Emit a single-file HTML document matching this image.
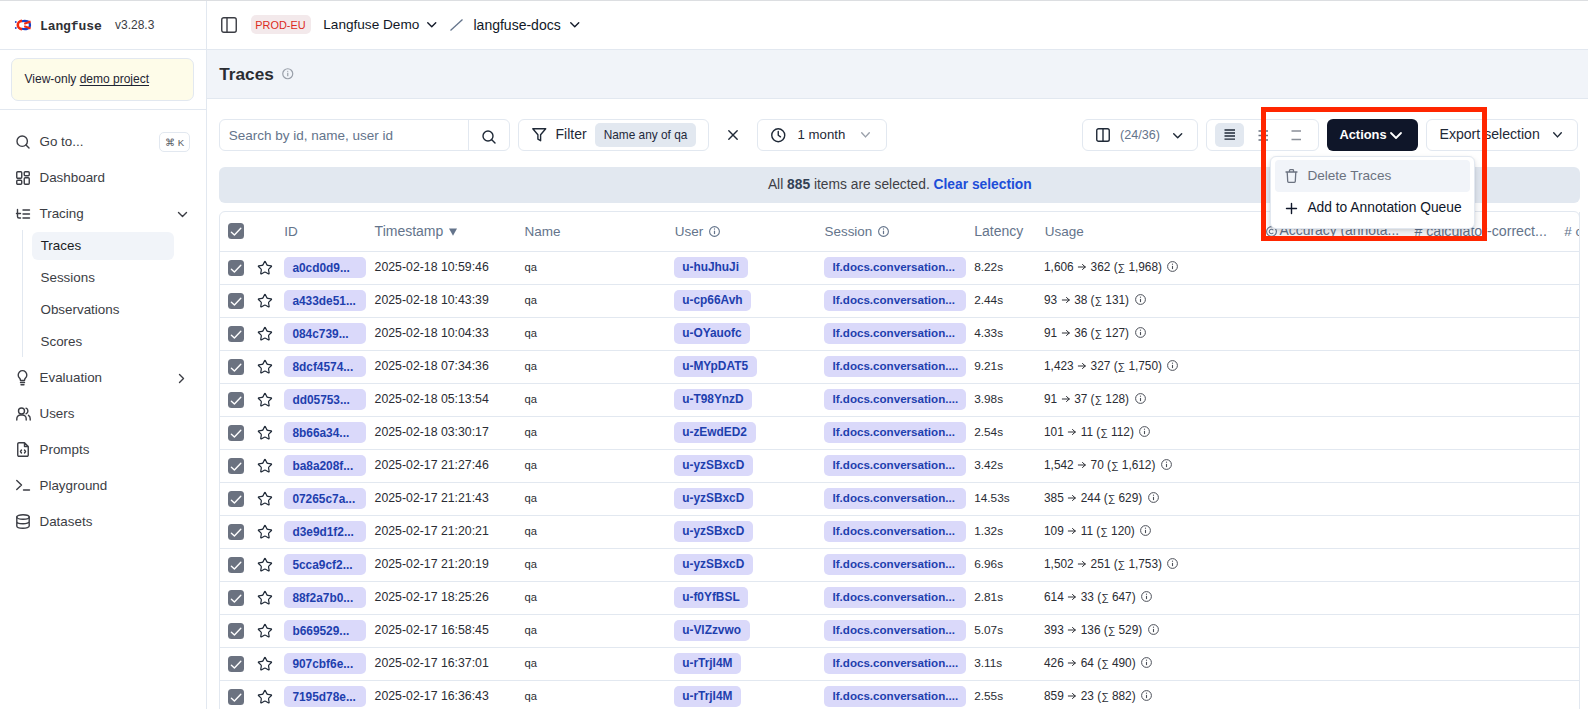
<!DOCTYPE html>
<html><head><meta charset="utf-8">
<style>
*{box-sizing:border-box;margin:0;padding:0}
html,body{width:1588px;height:709px;overflow:hidden;background:#fff;font-family:"Liberation Sans",sans-serif;color:#0f172a;position:relative}
.a{position:absolute}
.t{position:absolute;white-space:nowrap;line-height:1}
svg{position:absolute;overflow:visible}
.ic{fill:none;stroke:#3b3d44;stroke-width:1.4;stroke-linecap:round;stroke-linejoin:round}
</style></head><body>
<div class="a" style="left:0px;top:0px;width:1588px;height:1px;background:#dcdee1;"></div>
<div class="a" style="left:206px;top:1px;width:1px;height:708px;background:#e2e8f0;"></div>
<div class="a" style="left:0px;top:49px;width:206px;height:1px;background:#e2e8f0;"></div>
<div class="a" style="left:0px;top:109px;width:206px;height:1px;background:#e2e8f0;"></div>
<div class="a" style="left:207px;top:49px;width:1381px;height:1px;background:#e2e8f0;"></div>
<div class="a" style="left:207px;top:50px;width:1381px;height:48px;background:#f1f4f9;"></div>
<div class="a" style="left:207px;top:98px;width:1381px;height:1px;background:#e2e8f0;"></div>
<svg style="left:15px;top:20px;" width="16" height="10" viewBox="0 0 16 10"><path d="M6.8 1.2 C11 0.1 15 1.2 15 5 C15 8.8 11 9.9 6.8 8.8" fill="none" stroke="#1d3ec2" stroke-width="2.2"/><path d="M7 0.9 A4.2 4.1 0 0 0 7 9.1" fill="none" stroke="#f2290f" stroke-width="2.6"/><path d="M9.2 3.8 L15.6 1.4 M9.2 6.3 L15.6 8.6" stroke="#f2290f" stroke-width="2.1"/><circle cx="0.8" cy="2" r="0.9" fill="#1d3ec2"/><circle cx="0.8" cy="8" r="0.9" fill="#1d3ec2"/></svg>
<div class="t" style="left:40px;top:19.64px;font-size:13px;color:#2f3035;font-weight:700;font-family:'Liberation Mono',monospace;letter-spacing:-0.1px">Langfuse</div>
<div class="t" style="left:115px;top:19.44px;font-size:12px;color:#3b3d44;font-weight:400;">v3.28.3</div>
<div class="a" style="left:11px;top:58px;width:183px;height:43px;background:#fefce9;border:1px solid #e2e8f0;border-radius:7px"></div>
<div class="t" style="left:24.5px;top:73.44px;font-size:12px;color:#1e2433;font-weight:400;">View-only <span style="text-decoration:underline;text-underline-offset:2px">demo project</span></div>
<div class="t" style="left:39.5px;top:135.06px;font-size:13.4px;color:#3b3d44;font-weight:400;">Go to...</div>
<svg style="left:16px;top:135px;" width="14" height="14" viewBox="0 0 14 14"><circle cx="6.2" cy="6.2" r="5.2" class="ic"/><path d="M10 10 L13 13" class="ic"/></svg>
<div class="a" style="left:159px;top:132px;width:30.5px;height:19.5px;background:#fff;border:1px solid #e2e8f0;border-radius:5px"></div>
<div class="t" style="left:165.2px;top:137.97px;font-size:9.6px;color:#555a63;font-weight:400;">⌘ K</div>
<div class="t" style="left:39.5px;top:170.96px;font-size:13.4px;color:#3b3d44;font-weight:400;">Dashboard</div>
<svg style="left:16px;top:171px;" width="14" height="14" viewBox="0 0 14 14"><rect x="0.75" y="0.75" width="5" height="6.5" rx="1" class="ic"/><rect x="8.25" y="0.75" width="5" height="4" rx="1" class="ic"/><rect x="8.25" y="6.75" width="5" height="6.5" rx="1" class="ic"/><rect x="0.75" y="9.25" width="5" height="4" rx="1" class="ic"/></svg>
<div class="t" style="left:39.5px;top:207.06px;font-size:13.4px;color:#3b3d44;font-weight:400;">Tracing</div>
<svg style="left:16px;top:209px;" width="14" height="10" viewBox="0 0 14 10"><path d="M1.5 0.5 V7.5 Q1.5 9 3 9 H4.5 M0.5 4.5 H4.5 M7 1 H13.5 M7 5 H13.5 M7 9 H13.5" class="ic"/></svg>
<svg style="left:177.5px;top:211.5px;" width="9" height="5" viewBox="0 0 9 5"><path d="M0.5 0.5 L4.5 4.5 L8.5 0.5" class="ic"/></svg>
<div class="a" style="left:22px;top:230px;width:1px;height:127px;background:#e2e8f0;"></div>
<div class="a" style="left:32px;top:232px;width:142px;height:28px;background:#f1f4f9;border-radius:6px"></div>
<style>.sub{}</style>
<div class="t" style="left:40.7px;top:239.06px;font-size:13.4px;color:#1a1c22;font-weight:400;">Traces</div>
<div class="t" style="left:40.5px;top:271.06px;font-size:13.4px;color:#3b3d44;font-weight:400;">Sessions</div>
<div class="t" style="left:40.5px;top:303.06px;font-size:13.4px;color:#3b3d44;font-weight:400;">Observations</div>
<div class="t" style="left:40.5px;top:335.06px;font-size:13.4px;color:#3b3d44;font-weight:400;">Scores</div>
<div class="t" style="left:39.5px;top:371.06px;font-size:13.4px;color:#3b3d44;font-weight:400;">Evaluation</div>
<svg style="left:17px;top:371px;" width="11" height="15" viewBox="0 0 11 15"><path d="M3.5 9.5 Q3.5 8 2.5 7 A4.3 4.3 0 1 1 8.5 7 Q7.5 8 7.5 9.5 Z" class="ic"/><path d="M3.5 11.5 H7.5 M4 13.8 H7" class="ic"/></svg>
<svg style="left:179px;top:374px;" width="6" height="9" viewBox="0 0 6 9"><path d="M0.5 0.5 L4.5 4.5 L0.5 8.5" class="ic"/></svg>
<div class="t" style="left:39.5px;top:407.06px;font-size:13.4px;color:#3b3d44;font-weight:400;">Users</div>
<svg style="left:15.5px;top:407px;" width="15" height="14" viewBox="0 0 15 14"><circle cx="5.5" cy="4" r="3" class="ic"/><path d="M0.8 13 V11.8 A3.8 3.8 0 0 1 4.6 8 H6.4 A3.8 3.8 0 0 1 10.2 11.8 V13 M10 1.2 A3 3 0 0 1 10 6.8 M12.5 8.3 A3.8 3.8 0 0 1 14.2 11.8 V13" class="ic"/></svg>
<div class="t" style="left:39.5px;top:443.06px;font-size:13.4px;color:#3b3d44;font-weight:400;">Prompts</div>
<svg style="left:17px;top:442px;" width="12" height="15" viewBox="0 0 12 15"><path d="M7.5 0.75 H2 A1.25 1.25 0 0 0 0.75 2 V13 A1.25 1.25 0 0 0 2 14.25 H10 A1.25 1.25 0 0 0 11.25 13 V4.5 Z M7.5 0.75 V4.5 H11.25" class="ic"/><path d="M4.5 8 L3.5 9.5 L4.5 11 M7.5 8 L8.5 9.5 L7.5 11" class="ic" stroke-width="1.1"/></svg>
<div class="t" style="left:39.5px;top:479.06px;font-size:13.4px;color:#3b3d44;font-weight:400;">Playground</div>
<svg style="left:16px;top:479px;" width="14" height="12" viewBox="0 0 14 12"><path d="M0.75 1.5 L5.5 6 L0.75 10.5 M7.5 11 H13.5" class="ic"/></svg>
<div class="t" style="left:39.5px;top:515.06px;font-size:13.4px;color:#3b3d44;font-weight:400;">Datasets</div>
<svg style="left:16px;top:514px;" width="14" height="15" viewBox="0 0 14 15"><ellipse cx="7" cy="3" rx="6.2" ry="2.3" class="ic"/><path d="M0.8 3 V12 A6.2 2.3 0 0 0 13.2 12 V3 M0.8 7.5 A6.2 2.3 0 0 0 13.2 7.5" class="ic"/></svg>
<svg style="left:221px;top:17px;" width="16" height="16" viewBox="0 0 16 16"><rect x="0.75" y="0.75" width="14.5" height="14.5" rx="2" class="ic"/><path d="M6 0.75 V15.25" class="ic"/></svg>
<div class="a" style="left:251px;top:15.3px;width:59.5px;height:19.2px;background:#f3e9eb;border-radius:5px"></div>
<div class="t" style="left:255.3px;top:20.27px;font-size:10.9px;color:#dc2b21;font-weight:400;">PROD-EU</div>
<div class="t" style="left:323.3px;top:18.29px;font-size:13.6px;color:#111827;font-weight:400;">Langfuse Demo</div>
<svg style="left:427px;top:22px;" width="9.5" height="6" viewBox="0 0 9.5 6"><path d="M0.75 0.75 L4.75 4.75 L8.75 0.75" class="ic" style="stroke:#111827"/></svg>
<svg style="left:449.5px;top:19px;" width="13" height="12" viewBox="0 0 13 12"><path d="M0.5 11.5 L12.5 0.5" fill="none" stroke="#64748b" stroke-width="1.3"/></svg>
<div class="t" style="left:473.5px;top:17.95px;font-size:14px;color:#111827;font-weight:400;">langfuse-docs</div>
<svg style="left:569.5px;top:22px;" width="9.5" height="6" viewBox="0 0 9.5 6"><path d="M0.75 0.75 L4.75 4.75 L8.75 0.75" class="ic" style="stroke:#111827"/></svg>
<div class="t" style="left:219.3px;top:65.94px;font-size:17.2px;color:#2b2d33;font-weight:700;">Traces</div>
<svg style="left:282.3px;top:68.3px;" width="11.5" height="11.5" viewBox="0 0 11.5 11.5"><circle cx="5.75" cy="5.75" r="5" fill="none" stroke="#9aa0aa" stroke-width="1.2"/><path d="M5.75 4.8 V8.3" stroke="#9aa0aa" stroke-width="1.2"/><circle cx="5.75" cy="3.3" r="0.6" fill="#9aa0aa"/></svg>
<div class="a" style="left:219px;top:119px;width:291px;height:32px;background:#fff;border:1px solid #e2e8f0;border-radius:6px;"></div>
<div class="a" style="left:468px;top:120px;width:1px;height:30px;background:#e2e8f0;"></div>
<div class="t" style="left:228.7px;top:129.17px;font-size:13.5px;color:#64748b;font-weight:400;">Search by id, name, user id</div>
<svg style="left:482px;top:129.5px;" width="14" height="14" viewBox="0 0 14 14"><circle cx="6" cy="6" r="5" class="ic" style="stroke:#1f2937"/><path d="M9.8 9.8 L13 13" class="ic" style="stroke:#1f2937"/></svg>
<div class="a" style="left:518px;top:119px;width:191px;height:32px;background:#fff;border:1px solid #e2e8f0;border-radius:6px;"></div>
<svg style="left:531.5px;top:128px;" width="14.5" height="13.5" viewBox="0 0 14.5 13.5"><path d="M0.8 0.8 H13.7 L8.6 6.8 V12.7 L5.9 11.2 V6.8 Z" class="ic" style="stroke:#1f2937"/></svg>
<div class="t" style="left:555.5px;top:127.45px;font-size:14px;color:#1f2937;font-weight:400;">Filter</div>
<div class="a" style="left:595px;top:123px;width:101px;height:23.6px;background:#e2e8f0;border-radius:5px"></div>
<div class="t" style="left:603.7px;top:130.17px;font-size:11.85px;color:#1e293b;font-weight:400;">Name any of qa</div>
<svg style="left:728px;top:130px;" width="10" height="10" viewBox="0 0 10 10"><path d="M0.8 0.8 L9.2 9.2 M9.2 0.8 L0.8 9.2" class="ic" style="stroke:#1f2937"/></svg>
<div class="a" style="left:757px;top:119px;width:129.5px;height:32px;background:#fff;border:1px solid #e2e8f0;border-radius:6px;"></div>
<svg style="left:770.5px;top:127.5px;" width="14.5" height="14.5" viewBox="0 0 14.5 14.5"><circle cx="7.25" cy="7.25" r="6.5" class="ic" style="stroke:#1f2937"/><path d="M7.25 3.5 V7.25 L9.5 8.8" class="ic" style="stroke:#1f2937"/></svg>
<div class="t" style="left:797.6px;top:128.13px;font-size:13.2px;color:#1f2937;font-weight:400;">1 month</div>
<svg style="left:860.6px;top:132px;" width="9" height="5.8" viewBox="0 0 9 5.8"><path d="M0.7 0.7 L4.5 4.9 L8.3 0.7" class="ic" style="stroke:#9aa0aa"/></svg>
<div class="a" style="left:1082px;top:119px;width:116px;height:32px;background:#fff;border:1px solid #e2e8f0;border-radius:6px;"></div>
<svg style="left:1096px;top:128px;" width="14" height="14" viewBox="0 0 14 14"><rect x="0.75" y="0.75" width="12.5" height="12.5" rx="1.8" class="ic" style="stroke:#1f2937"/><path d="M7 0.75 V13.25" class="ic" style="stroke:#1f2937"/></svg>
<div class="t" style="left:1120px;top:129.43px;font-size:12.6px;color:#64748b;font-weight:400;">(24/36)</div>
<svg style="left:1172.6px;top:132.5px;" width="9.4" height="5.5" viewBox="0 0 9.4 5.5"><path d="M0.7 0.7 L4.7 4.8 L8.7 0.7" class="ic" style="stroke:#1f2937"/></svg>
<div class="a" style="left:1206px;top:119px;width:113px;height:32px;background:#fff;border:1px solid #e2e8f0;border-radius:6px;"></div>
<div class="a" style="left:1215px;top:123.3px;width:29px;height:23.7px;background:#e2e8f0;border-radius:5px"></div>
<svg style="left:1224px;top:129px;" width="11.5" height="11.5" viewBox="0 0 11.5 11.5"><path d="M0.5 1 H11 M0.5 4 H11 M0.5 7 H11 M0.5 10.2 H11" stroke="#1f2937" stroke-width="1.3"/></svg>
<svg style="left:1257.5px;top:129.5px;" width="10.5" height="11" viewBox="0 0 10.5 11"><path d="M0.5 1 H10 M0.5 5.5 H10 M0.5 10 H10" stroke="#6b7280" stroke-width="1.3"/></svg>
<svg style="left:1290.5px;top:130px;" width="10.5" height="10.5" viewBox="0 0 10.5 10.5"><path d="M0.5 1 H10 M0.5 9.5 H10" stroke="#8a8f98" stroke-width="1.3"/></svg>
<div class="a" style="left:1327px;top:119px;width:91px;height:32px;background:#0f1629;border-radius:6px"></div>
<div class="t" style="left:1339.4px;top:129.08px;font-size:12.9px;color:#ffffff;font-weight:700;">Actions</div>
<svg style="left:1390px;top:131.5px;" width="12" height="7.5" viewBox="0 0 12 7.5"><path d="M1 1 L6 6 L11 1" fill="none" stroke="#fff" stroke-width="1.8" stroke-linecap="round" stroke-linejoin="round"/></svg>
<div class="a" style="left:1426px;top:119px;width:152px;height:32px;background:#fff;border:1px solid #e2e8f0;border-radius:6px;"></div>
<div class="t" style="left:1439.5px;top:127.46px;font-size:14.1px;color:#1f2937;font-weight:400;">Export selection</div>
<svg style="left:1553px;top:132px;" width="9" height="6" viewBox="0 0 9 6"><path d="M0.7 0.7 L4.5 4.9 L8.3 0.7" class="ic" style="stroke:#1f2937"/></svg>
<div class="a" style="left:219px;top:167px;width:1360.5px;height:36px;background:#e2e8f0;border-radius:6px"></div>
<div class="t" style="left:767.9px;top:178.22px;font-size:13.8px;color:#3f3f46;font-weight:400;">All <b style="color:#334155">885</b> items are selected. <b style="color:#1d4ed8">Clear selection</b></div>
<div class="a" style="left:219px;top:211px;width:1361px;height:520px;background:transparent;border:1px solid #e2e8f0;border-radius:6px"></div>
<div class="a" style="left:228px;top:223px;width:16px;height:16px;background:#6b7280;border-radius:3.5px"></div>
<svg style="left:228px;top:223px;" width="16" height="16" viewBox="0 0 16 16"><path d="M3.4 9.2 L6.4 12 L12.8 5.3" fill="none" stroke="#fff" stroke-width="1.4" stroke-linecap="round" stroke-linejoin="round"/></svg>
<div class="t" style="left:284.3px;top:224.77px;font-size:13.5px;color:#64748b;font-weight:400;">ID</div>
<div class="t" style="left:374.6px;top:224.35px;font-size:14px;color:#64748b;font-weight:400;">Timestamp</div>
<svg style="left:449px;top:227.5px;" width="8" height="8" viewBox="0 0 8 8"><path d="M0 0.5 H8 L4 7.8 Z" fill="#64748b"/></svg>
<div class="t" style="left:524.6px;top:224.77px;font-size:13.5px;color:#64748b;font-weight:400;">Name</div>
<div class="t" style="left:674.8px;top:224.77px;font-size:13.5px;color:#64748b;font-weight:400;">User</div>
<svg style="left:708.8px;top:226px;" width="11" height="11" viewBox="0 0 11 11"><circle cx="5.5" cy="5.5" r="4.9" fill="none" stroke="#64748b" stroke-width="1.1"/><path d="M5.5 4.7 V8.1" stroke="#64748b" stroke-width="1.2"/><circle cx="5.5" cy="3.0" r="0.65" fill="#64748b"/></svg>
<div class="t" style="left:824.6px;top:224.86px;font-size:13.4px;color:#64748b;font-weight:400;">Session</div>
<svg style="left:877.5px;top:226px;" width="11" height="11" viewBox="0 0 11 11"><circle cx="5.5" cy="5.5" r="4.9" fill="none" stroke="#64748b" stroke-width="1.1"/><path d="M5.5 4.7 V8.1" stroke="#64748b" stroke-width="1.2"/><circle cx="5.5" cy="3.0" r="0.65" fill="#64748b"/></svg>
<div class="t" style="left:974.2px;top:224.35px;font-size:14px;color:#64748b;font-weight:400;">Latency</div>
<div class="t" style="left:1044.7px;top:224.77px;font-size:13.5px;color:#64748b;font-weight:400;">Usage</div>
<svg style="left:1266px;top:225.5px;" width="11" height="11" viewBox="0 0 11 11"><circle cx="5.5" cy="5.5" r="4.9" fill="none" stroke="#64748b" stroke-width="1.1"/><path d="M7.3 4.3 A2.2 2.2 0 1 0 7.3 6.7" fill="none" stroke="#64748b" stroke-width="1.1"/></svg>
<div class="t" style="left:1279.5px;top:224.43px;font-size:13.9px;color:#64748b;font-weight:400;">Accuracy (annota...</div>
<div class="t" style="left:1414.4px;top:224.18px;font-size:14.2px;color:#64748b;font-weight:400;"># calculator-correct...</div>
<div class="t" style="left:1564.3px;top:224.77px;font-size:13.5px;color:#64748b;font-weight:400;"># c</div>
<div class="a" style="left:1579px;top:212px;width:9px;height:500px;background:#fff"></div>
<div class="a" style="left:1579px;top:212px;width:1px;height:500px;background:#e2e8f0;"></div>
<div class="a" style="left:220px;top:251px;width:1359px;height:1px;background:#e2e8f0;"></div>
<div class="a" style="left:228px;top:260px;width:16px;height:16px;background:#6b7280;border-radius:3.5px"></div>
<svg style="left:228px;top:260px;" width="16" height="16" viewBox="0 0 16 16"><path d="M3.4 9.2 L6.4 12 L12.8 5.3" fill="none" stroke="#fff" stroke-width="1.4" stroke-linecap="round" stroke-linejoin="round"/></svg>
<svg style="left:256.8px;top:260.4px;" width="15.9" height="15.9" viewBox="0 0 24 24"><path d="M11.525 2.295a.53.53 0 0 1 .95 0l2.31 4.679a2.123 2.123 0 0 0 1.595 1.16l5.166.756a.53.53 0 0 1 .294.904l-3.736 3.638a2.123 2.123 0 0 0-.611 1.878l.882 5.14a.53.53 0 0 1-.771.56l-4.618-2.428a2.122 2.122 0 0 0-1.973 0L6.396 21.01a.53.53 0 0 1-.77-.56l.881-5.139a2.122 2.122 0 0 0-.611-1.879L2.16 9.795a.53.53 0 0 1 .294-.906l5.165-.755a2.122 2.122 0 0 0 1.597-1.16z" fill="none" stroke="#1f2937" stroke-width="1.8" stroke-linejoin="round"/></svg>
<div class="a" style="left:284px;top:257px;width:82px;height:21px;background:#dad9fa;border-radius:5px"></div>
<div class="t" style="left:292.4px;top:262.63px;font-size:11.9px;color:#1e3fae;font-weight:700;">a0cd0d9...</div>
<div class="t" style="left:374.6px;top:261.09px;font-size:12.3px;color:#2a2c33;font-weight:400;">2025-02-18 10:59:46</div>
<div class="t" style="left:524.6px;top:262.02px;font-size:11.2px;color:#2a2c33;font-weight:400;">qa</div>
<div class="t" style="left:674px;top:257px;height:21px;padding:0 8.6px 0 8.2px;background:#dad9fa;border-radius:5px;font-size:11.9px;font-weight:700;color:#1e3fae;line-height:20.6px">u-huJhuJi</div>
<div class="a" style="left:824px;top:257px;width:142px;height:21px;background:#dad9fa;border-radius:5px"></div>
<div class="t" style="left:832.5px;top:261.08px;font-size:11.6px;color:#1e3fae;font-weight:700;">lf.docs.conversation...</div>
<div class="t" style="left:974.2px;top:261.81px;font-size:11.8px;color:#2a2c33;font-weight:400;">8.22s</div>
<div class="t" style="left:1044px;top:261.27px;font-size:11.85px;color:#2a2c33">1,606 <svg style="position:relative;display:inline-block;vertical-align:0.5px;margin:0 1.2px" width="8" height="6" viewBox="0 0 8 6"><path d="M0.3 3 H7.3 M4.5 0.5 L7.3 3 L4.5 5.5" fill="none" stroke="#2a2c33" stroke-width="1.0" stroke-linecap="round" stroke-linejoin="round"/></svg> 362 (<span style="font-size:10.5px">∑</span> 1,968)<svg style="position:relative;display:inline-block;vertical-align:-1.5px;margin-left:5.5px" width="11" height="11" viewBox="0 0 11 11"><circle cx="5.5" cy="5.5" r="4.9" fill="none" stroke="#4b4f58" stroke-width="1"/><path d="M5.5 4.9 V8.1" stroke="#4b4f58" stroke-width="1.1"/><circle cx="5.5" cy="3.2" r="0.6" fill="#4b4f58"/></svg></div>
<div class="a" style="left:220px;top:284px;width:1359px;height:1px;background:#e2e8f0;"></div>
<div class="a" style="left:228px;top:293px;width:16px;height:16px;background:#6b7280;border-radius:3.5px"></div>
<svg style="left:228px;top:293px;" width="16" height="16" viewBox="0 0 16 16"><path d="M3.4 9.2 L6.4 12 L12.8 5.3" fill="none" stroke="#fff" stroke-width="1.4" stroke-linecap="round" stroke-linejoin="round"/></svg>
<svg style="left:256.8px;top:293.4px;" width="15.9" height="15.9" viewBox="0 0 24 24"><path d="M11.525 2.295a.53.53 0 0 1 .95 0l2.31 4.679a2.123 2.123 0 0 0 1.595 1.16l5.166.756a.53.53 0 0 1 .294.904l-3.736 3.638a2.123 2.123 0 0 0-.611 1.878l.882 5.14a.53.53 0 0 1-.771.56l-4.618-2.428a2.122 2.122 0 0 0-1.973 0L6.396 21.01a.53.53 0 0 1-.77-.56l.881-5.139a2.122 2.122 0 0 0-.611-1.879L2.16 9.795a.53.53 0 0 1 .294-.906l5.165-.755a2.122 2.122 0 0 0 1.597-1.16z" fill="none" stroke="#1f2937" stroke-width="1.8" stroke-linejoin="round"/></svg>
<div class="a" style="left:284px;top:290px;width:82px;height:21px;background:#dad9fa;border-radius:5px"></div>
<div class="t" style="left:292.4px;top:295.63px;font-size:11.9px;color:#1e3fae;font-weight:700;">a433de51...</div>
<div class="t" style="left:374.6px;top:294.09px;font-size:12.3px;color:#2a2c33;font-weight:400;">2025-02-18 10:43:39</div>
<div class="t" style="left:524.6px;top:295.02px;font-size:11.2px;color:#2a2c33;font-weight:400;">qa</div>
<div class="t" style="left:674px;top:290px;height:21px;padding:0 8.6px 0 8.2px;background:#dad9fa;border-radius:5px;font-size:11.9px;font-weight:700;color:#1e3fae;line-height:20.6px">u-cp66Avh</div>
<div class="a" style="left:824px;top:290px;width:142px;height:21px;background:#dad9fa;border-radius:5px"></div>
<div class="t" style="left:832.5px;top:294.08px;font-size:11.6px;color:#1e3fae;font-weight:700;">lf.docs.conversation...</div>
<div class="t" style="left:974.2px;top:294.81px;font-size:11.8px;color:#2a2c33;font-weight:400;">2.44s</div>
<div class="t" style="left:1044px;top:294.27px;font-size:11.85px;color:#2a2c33">93 <svg style="position:relative;display:inline-block;vertical-align:0.5px;margin:0 1.2px" width="8" height="6" viewBox="0 0 8 6"><path d="M0.3 3 H7.3 M4.5 0.5 L7.3 3 L4.5 5.5" fill="none" stroke="#2a2c33" stroke-width="1.0" stroke-linecap="round" stroke-linejoin="round"/></svg> 38 (<span style="font-size:10.5px">∑</span> 131)<svg style="position:relative;display:inline-block;vertical-align:-1.5px;margin-left:5.5px" width="11" height="11" viewBox="0 0 11 11"><circle cx="5.5" cy="5.5" r="4.9" fill="none" stroke="#4b4f58" stroke-width="1"/><path d="M5.5 4.9 V8.1" stroke="#4b4f58" stroke-width="1.1"/><circle cx="5.5" cy="3.2" r="0.6" fill="#4b4f58"/></svg></div>
<div class="a" style="left:220px;top:317px;width:1359px;height:1px;background:#e2e8f0;"></div>
<div class="a" style="left:228px;top:326px;width:16px;height:16px;background:#6b7280;border-radius:3.5px"></div>
<svg style="left:228px;top:326px;" width="16" height="16" viewBox="0 0 16 16"><path d="M3.4 9.2 L6.4 12 L12.8 5.3" fill="none" stroke="#fff" stroke-width="1.4" stroke-linecap="round" stroke-linejoin="round"/></svg>
<svg style="left:256.8px;top:326.4px;" width="15.9" height="15.9" viewBox="0 0 24 24"><path d="M11.525 2.295a.53.53 0 0 1 .95 0l2.31 4.679a2.123 2.123 0 0 0 1.595 1.16l5.166.756a.53.53 0 0 1 .294.904l-3.736 3.638a2.123 2.123 0 0 0-.611 1.878l.882 5.14a.53.53 0 0 1-.771.56l-4.618-2.428a2.122 2.122 0 0 0-1.973 0L6.396 21.01a.53.53 0 0 1-.77-.56l.881-5.139a2.122 2.122 0 0 0-.611-1.879L2.16 9.795a.53.53 0 0 1 .294-.906l5.165-.755a2.122 2.122 0 0 0 1.597-1.16z" fill="none" stroke="#1f2937" stroke-width="1.8" stroke-linejoin="round"/></svg>
<div class="a" style="left:284px;top:323px;width:82px;height:21px;background:#dad9fa;border-radius:5px"></div>
<div class="t" style="left:292.4px;top:328.63px;font-size:11.9px;color:#1e3fae;font-weight:700;">084c739...</div>
<div class="t" style="left:374.6px;top:327.09px;font-size:12.3px;color:#2a2c33;font-weight:400;">2025-02-18 10:04:33</div>
<div class="t" style="left:524.6px;top:328.02px;font-size:11.2px;color:#2a2c33;font-weight:400;">qa</div>
<div class="t" style="left:674px;top:323px;height:21px;padding:0 8.6px 0 8.2px;background:#dad9fa;border-radius:5px;font-size:11.9px;font-weight:700;color:#1e3fae;line-height:20.6px">u-OYauofc</div>
<div class="a" style="left:824px;top:323px;width:142px;height:21px;background:#dad9fa;border-radius:5px"></div>
<div class="t" style="left:832.5px;top:327.08px;font-size:11.6px;color:#1e3fae;font-weight:700;">lf.docs.conversation...</div>
<div class="t" style="left:974.2px;top:327.81px;font-size:11.8px;color:#2a2c33;font-weight:400;">4.33s</div>
<div class="t" style="left:1044px;top:327.27px;font-size:11.85px;color:#2a2c33">91 <svg style="position:relative;display:inline-block;vertical-align:0.5px;margin:0 1.2px" width="8" height="6" viewBox="0 0 8 6"><path d="M0.3 3 H7.3 M4.5 0.5 L7.3 3 L4.5 5.5" fill="none" stroke="#2a2c33" stroke-width="1.0" stroke-linecap="round" stroke-linejoin="round"/></svg> 36 (<span style="font-size:10.5px">∑</span> 127)<svg style="position:relative;display:inline-block;vertical-align:-1.5px;margin-left:5.5px" width="11" height="11" viewBox="0 0 11 11"><circle cx="5.5" cy="5.5" r="4.9" fill="none" stroke="#4b4f58" stroke-width="1"/><path d="M5.5 4.9 V8.1" stroke="#4b4f58" stroke-width="1.1"/><circle cx="5.5" cy="3.2" r="0.6" fill="#4b4f58"/></svg></div>
<div class="a" style="left:220px;top:350px;width:1359px;height:1px;background:#e2e8f0;"></div>
<div class="a" style="left:228px;top:359px;width:16px;height:16px;background:#6b7280;border-radius:3.5px"></div>
<svg style="left:228px;top:359px;" width="16" height="16" viewBox="0 0 16 16"><path d="M3.4 9.2 L6.4 12 L12.8 5.3" fill="none" stroke="#fff" stroke-width="1.4" stroke-linecap="round" stroke-linejoin="round"/></svg>
<svg style="left:256.8px;top:359.4px;" width="15.9" height="15.9" viewBox="0 0 24 24"><path d="M11.525 2.295a.53.53 0 0 1 .95 0l2.31 4.679a2.123 2.123 0 0 0 1.595 1.16l5.166.756a.53.53 0 0 1 .294.904l-3.736 3.638a2.123 2.123 0 0 0-.611 1.878l.882 5.14a.53.53 0 0 1-.771.56l-4.618-2.428a2.122 2.122 0 0 0-1.973 0L6.396 21.01a.53.53 0 0 1-.77-.56l.881-5.139a2.122 2.122 0 0 0-.611-1.879L2.16 9.795a.53.53 0 0 1 .294-.906l5.165-.755a2.122 2.122 0 0 0 1.597-1.16z" fill="none" stroke="#1f2937" stroke-width="1.8" stroke-linejoin="round"/></svg>
<div class="a" style="left:284px;top:356px;width:82px;height:21px;background:#dad9fa;border-radius:5px"></div>
<div class="t" style="left:292.4px;top:361.63px;font-size:11.9px;color:#1e3fae;font-weight:700;">8dcf4574...</div>
<div class="t" style="left:374.6px;top:360.09px;font-size:12.3px;color:#2a2c33;font-weight:400;">2025-02-18 07:34:36</div>
<div class="t" style="left:524.6px;top:361.02px;font-size:11.2px;color:#2a2c33;font-weight:400;">qa</div>
<div class="t" style="left:674px;top:356px;height:21px;padding:0 8.6px 0 8.2px;background:#dad9fa;border-radius:5px;font-size:11.9px;font-weight:700;color:#1e3fae;line-height:20.6px">u-MYpDAT5</div>
<div class="a" style="left:824px;top:356px;width:142px;height:21px;background:#dad9fa;border-radius:5px"></div>
<div class="t" style="left:832.5px;top:360.08px;font-size:11.6px;color:#1e3fae;font-weight:700;">lf.docs.conversation....</div>
<div class="t" style="left:974.2px;top:360.81px;font-size:11.8px;color:#2a2c33;font-weight:400;">9.21s</div>
<div class="t" style="left:1044px;top:360.27px;font-size:11.85px;color:#2a2c33">1,423 <svg style="position:relative;display:inline-block;vertical-align:0.5px;margin:0 1.2px" width="8" height="6" viewBox="0 0 8 6"><path d="M0.3 3 H7.3 M4.5 0.5 L7.3 3 L4.5 5.5" fill="none" stroke="#2a2c33" stroke-width="1.0" stroke-linecap="round" stroke-linejoin="round"/></svg> 327 (<span style="font-size:10.5px">∑</span> 1,750)<svg style="position:relative;display:inline-block;vertical-align:-1.5px;margin-left:5.5px" width="11" height="11" viewBox="0 0 11 11"><circle cx="5.5" cy="5.5" r="4.9" fill="none" stroke="#4b4f58" stroke-width="1"/><path d="M5.5 4.9 V8.1" stroke="#4b4f58" stroke-width="1.1"/><circle cx="5.5" cy="3.2" r="0.6" fill="#4b4f58"/></svg></div>
<div class="a" style="left:220px;top:383px;width:1359px;height:1px;background:#e2e8f0;"></div>
<div class="a" style="left:228px;top:392px;width:16px;height:16px;background:#6b7280;border-radius:3.5px"></div>
<svg style="left:228px;top:392px;" width="16" height="16" viewBox="0 0 16 16"><path d="M3.4 9.2 L6.4 12 L12.8 5.3" fill="none" stroke="#fff" stroke-width="1.4" stroke-linecap="round" stroke-linejoin="round"/></svg>
<svg style="left:256.8px;top:392.4px;" width="15.9" height="15.9" viewBox="0 0 24 24"><path d="M11.525 2.295a.53.53 0 0 1 .95 0l2.31 4.679a2.123 2.123 0 0 0 1.595 1.16l5.166.756a.53.53 0 0 1 .294.904l-3.736 3.638a2.123 2.123 0 0 0-.611 1.878l.882 5.14a.53.53 0 0 1-.771.56l-4.618-2.428a2.122 2.122 0 0 0-1.973 0L6.396 21.01a.53.53 0 0 1-.77-.56l.881-5.139a2.122 2.122 0 0 0-.611-1.879L2.16 9.795a.53.53 0 0 1 .294-.906l5.165-.755a2.122 2.122 0 0 0 1.597-1.16z" fill="none" stroke="#1f2937" stroke-width="1.8" stroke-linejoin="round"/></svg>
<div class="a" style="left:284px;top:389px;width:82px;height:21px;background:#dad9fa;border-radius:5px"></div>
<div class="t" style="left:292.4px;top:394.63px;font-size:11.9px;color:#1e3fae;font-weight:700;">dd05753...</div>
<div class="t" style="left:374.6px;top:393.09px;font-size:12.3px;color:#2a2c33;font-weight:400;">2025-02-18 05:13:54</div>
<div class="t" style="left:524.6px;top:394.02px;font-size:11.2px;color:#2a2c33;font-weight:400;">qa</div>
<div class="t" style="left:674px;top:389px;height:21px;padding:0 8.6px 0 8.2px;background:#dad9fa;border-radius:5px;font-size:11.9px;font-weight:700;color:#1e3fae;line-height:20.6px">u-T98YnzD</div>
<div class="a" style="left:824px;top:389px;width:142px;height:21px;background:#dad9fa;border-radius:5px"></div>
<div class="t" style="left:832.5px;top:393.08px;font-size:11.6px;color:#1e3fae;font-weight:700;">lf.docs.conversation....</div>
<div class="t" style="left:974.2px;top:393.81px;font-size:11.8px;color:#2a2c33;font-weight:400;">3.98s</div>
<div class="t" style="left:1044px;top:393.27px;font-size:11.85px;color:#2a2c33">91 <svg style="position:relative;display:inline-block;vertical-align:0.5px;margin:0 1.2px" width="8" height="6" viewBox="0 0 8 6"><path d="M0.3 3 H7.3 M4.5 0.5 L7.3 3 L4.5 5.5" fill="none" stroke="#2a2c33" stroke-width="1.0" stroke-linecap="round" stroke-linejoin="round"/></svg> 37 (<span style="font-size:10.5px">∑</span> 128)<svg style="position:relative;display:inline-block;vertical-align:-1.5px;margin-left:5.5px" width="11" height="11" viewBox="0 0 11 11"><circle cx="5.5" cy="5.5" r="4.9" fill="none" stroke="#4b4f58" stroke-width="1"/><path d="M5.5 4.9 V8.1" stroke="#4b4f58" stroke-width="1.1"/><circle cx="5.5" cy="3.2" r="0.6" fill="#4b4f58"/></svg></div>
<div class="a" style="left:220px;top:416px;width:1359px;height:1px;background:#e2e8f0;"></div>
<div class="a" style="left:228px;top:425px;width:16px;height:16px;background:#6b7280;border-radius:3.5px"></div>
<svg style="left:228px;top:425px;" width="16" height="16" viewBox="0 0 16 16"><path d="M3.4 9.2 L6.4 12 L12.8 5.3" fill="none" stroke="#fff" stroke-width="1.4" stroke-linecap="round" stroke-linejoin="round"/></svg>
<svg style="left:256.8px;top:425.4px;" width="15.9" height="15.9" viewBox="0 0 24 24"><path d="M11.525 2.295a.53.53 0 0 1 .95 0l2.31 4.679a2.123 2.123 0 0 0 1.595 1.16l5.166.756a.53.53 0 0 1 .294.904l-3.736 3.638a2.123 2.123 0 0 0-.611 1.878l.882 5.14a.53.53 0 0 1-.771.56l-4.618-2.428a2.122 2.122 0 0 0-1.973 0L6.396 21.01a.53.53 0 0 1-.77-.56l.881-5.139a2.122 2.122 0 0 0-.611-1.879L2.16 9.795a.53.53 0 0 1 .294-.906l5.165-.755a2.122 2.122 0 0 0 1.597-1.16z" fill="none" stroke="#1f2937" stroke-width="1.8" stroke-linejoin="round"/></svg>
<div class="a" style="left:284px;top:422px;width:82px;height:21px;background:#dad9fa;border-radius:5px"></div>
<div class="t" style="left:292.4px;top:427.63px;font-size:11.9px;color:#1e3fae;font-weight:700;">8b66a34...</div>
<div class="t" style="left:374.6px;top:426.09px;font-size:12.3px;color:#2a2c33;font-weight:400;">2025-02-18 03:30:17</div>
<div class="t" style="left:524.6px;top:427.02px;font-size:11.2px;color:#2a2c33;font-weight:400;">qa</div>
<div class="t" style="left:674px;top:422px;height:21px;padding:0 8.6px 0 8.2px;background:#dad9fa;border-radius:5px;font-size:11.9px;font-weight:700;color:#1e3fae;line-height:20.6px">u-zEwdED2</div>
<div class="a" style="left:824px;top:422px;width:142px;height:21px;background:#dad9fa;border-radius:5px"></div>
<div class="t" style="left:832.5px;top:426.08px;font-size:11.6px;color:#1e3fae;font-weight:700;">lf.docs.conversation...</div>
<div class="t" style="left:974.2px;top:426.81px;font-size:11.8px;color:#2a2c33;font-weight:400;">2.54s</div>
<div class="t" style="left:1044px;top:426.27px;font-size:11.85px;color:#2a2c33">101 <svg style="position:relative;display:inline-block;vertical-align:0.5px;margin:0 1.2px" width="8" height="6" viewBox="0 0 8 6"><path d="M0.3 3 H7.3 M4.5 0.5 L7.3 3 L4.5 5.5" fill="none" stroke="#2a2c33" stroke-width="1.0" stroke-linecap="round" stroke-linejoin="round"/></svg> 11 (<span style="font-size:10.5px">∑</span> 112)<svg style="position:relative;display:inline-block;vertical-align:-1.5px;margin-left:5.5px" width="11" height="11" viewBox="0 0 11 11"><circle cx="5.5" cy="5.5" r="4.9" fill="none" stroke="#4b4f58" stroke-width="1"/><path d="M5.5 4.9 V8.1" stroke="#4b4f58" stroke-width="1.1"/><circle cx="5.5" cy="3.2" r="0.6" fill="#4b4f58"/></svg></div>
<div class="a" style="left:220px;top:449px;width:1359px;height:1px;background:#e2e8f0;"></div>
<div class="a" style="left:228px;top:458px;width:16px;height:16px;background:#6b7280;border-radius:3.5px"></div>
<svg style="left:228px;top:458px;" width="16" height="16" viewBox="0 0 16 16"><path d="M3.4 9.2 L6.4 12 L12.8 5.3" fill="none" stroke="#fff" stroke-width="1.4" stroke-linecap="round" stroke-linejoin="round"/></svg>
<svg style="left:256.8px;top:458.4px;" width="15.9" height="15.9" viewBox="0 0 24 24"><path d="M11.525 2.295a.53.53 0 0 1 .95 0l2.31 4.679a2.123 2.123 0 0 0 1.595 1.16l5.166.756a.53.53 0 0 1 .294.904l-3.736 3.638a2.123 2.123 0 0 0-.611 1.878l.882 5.14a.53.53 0 0 1-.771.56l-4.618-2.428a2.122 2.122 0 0 0-1.973 0L6.396 21.01a.53.53 0 0 1-.77-.56l.881-5.139a2.122 2.122 0 0 0-.611-1.879L2.16 9.795a.53.53 0 0 1 .294-.906l5.165-.755a2.122 2.122 0 0 0 1.597-1.16z" fill="none" stroke="#1f2937" stroke-width="1.8" stroke-linejoin="round"/></svg>
<div class="a" style="left:284px;top:455px;width:82px;height:21px;background:#dad9fa;border-radius:5px"></div>
<div class="t" style="left:292.4px;top:460.63px;font-size:11.9px;color:#1e3fae;font-weight:700;">ba8a208f...</div>
<div class="t" style="left:374.6px;top:459.09px;font-size:12.3px;color:#2a2c33;font-weight:400;">2025-02-17 21:27:46</div>
<div class="t" style="left:524.6px;top:460.02px;font-size:11.2px;color:#2a2c33;font-weight:400;">qa</div>
<div class="t" style="left:674px;top:455px;height:21px;padding:0 8.6px 0 8.2px;background:#dad9fa;border-radius:5px;font-size:11.9px;font-weight:700;color:#1e3fae;line-height:20.6px">u-yzSBxcD</div>
<div class="a" style="left:824px;top:455px;width:142px;height:21px;background:#dad9fa;border-radius:5px"></div>
<div class="t" style="left:832.5px;top:459.08px;font-size:11.6px;color:#1e3fae;font-weight:700;">lf.docs.conversation...</div>
<div class="t" style="left:974.2px;top:459.81px;font-size:11.8px;color:#2a2c33;font-weight:400;">3.42s</div>
<div class="t" style="left:1044px;top:459.27px;font-size:11.85px;color:#2a2c33">1,542 <svg style="position:relative;display:inline-block;vertical-align:0.5px;margin:0 1.2px" width="8" height="6" viewBox="0 0 8 6"><path d="M0.3 3 H7.3 M4.5 0.5 L7.3 3 L4.5 5.5" fill="none" stroke="#2a2c33" stroke-width="1.0" stroke-linecap="round" stroke-linejoin="round"/></svg> 70 (<span style="font-size:10.5px">∑</span> 1,612)<svg style="position:relative;display:inline-block;vertical-align:-1.5px;margin-left:5.5px" width="11" height="11" viewBox="0 0 11 11"><circle cx="5.5" cy="5.5" r="4.9" fill="none" stroke="#4b4f58" stroke-width="1"/><path d="M5.5 4.9 V8.1" stroke="#4b4f58" stroke-width="1.1"/><circle cx="5.5" cy="3.2" r="0.6" fill="#4b4f58"/></svg></div>
<div class="a" style="left:220px;top:482px;width:1359px;height:1px;background:#e2e8f0;"></div>
<div class="a" style="left:228px;top:491px;width:16px;height:16px;background:#6b7280;border-radius:3.5px"></div>
<svg style="left:228px;top:491px;" width="16" height="16" viewBox="0 0 16 16"><path d="M3.4 9.2 L6.4 12 L12.8 5.3" fill="none" stroke="#fff" stroke-width="1.4" stroke-linecap="round" stroke-linejoin="round"/></svg>
<svg style="left:256.8px;top:491.4px;" width="15.9" height="15.9" viewBox="0 0 24 24"><path d="M11.525 2.295a.53.53 0 0 1 .95 0l2.31 4.679a2.123 2.123 0 0 0 1.595 1.16l5.166.756a.53.53 0 0 1 .294.904l-3.736 3.638a2.123 2.123 0 0 0-.611 1.878l.882 5.14a.53.53 0 0 1-.771.56l-4.618-2.428a2.122 2.122 0 0 0-1.973 0L6.396 21.01a.53.53 0 0 1-.77-.56l.881-5.139a2.122 2.122 0 0 0-.611-1.879L2.16 9.795a.53.53 0 0 1 .294-.906l5.165-.755a2.122 2.122 0 0 0 1.597-1.16z" fill="none" stroke="#1f2937" stroke-width="1.8" stroke-linejoin="round"/></svg>
<div class="a" style="left:284px;top:488px;width:82px;height:21px;background:#dad9fa;border-radius:5px"></div>
<div class="t" style="left:292.4px;top:493.63px;font-size:11.9px;color:#1e3fae;font-weight:700;">07265c7a...</div>
<div class="t" style="left:374.6px;top:492.09px;font-size:12.3px;color:#2a2c33;font-weight:400;">2025-02-17 21:21:43</div>
<div class="t" style="left:524.6px;top:493.02px;font-size:11.2px;color:#2a2c33;font-weight:400;">qa</div>
<div class="t" style="left:674px;top:488px;height:21px;padding:0 8.6px 0 8.2px;background:#dad9fa;border-radius:5px;font-size:11.9px;font-weight:700;color:#1e3fae;line-height:20.6px">u-yzSBxcD</div>
<div class="a" style="left:824px;top:488px;width:142px;height:21px;background:#dad9fa;border-radius:5px"></div>
<div class="t" style="left:832.5px;top:492.08px;font-size:11.6px;color:#1e3fae;font-weight:700;">lf.docs.conversation...</div>
<div class="t" style="left:974.2px;top:492.81px;font-size:11.8px;color:#2a2c33;font-weight:400;">14.53s</div>
<div class="t" style="left:1044px;top:492.27px;font-size:11.85px;color:#2a2c33">385 <svg style="position:relative;display:inline-block;vertical-align:0.5px;margin:0 1.2px" width="8" height="6" viewBox="0 0 8 6"><path d="M0.3 3 H7.3 M4.5 0.5 L7.3 3 L4.5 5.5" fill="none" stroke="#2a2c33" stroke-width="1.0" stroke-linecap="round" stroke-linejoin="round"/></svg> 244 (<span style="font-size:10.5px">∑</span> 629)<svg style="position:relative;display:inline-block;vertical-align:-1.5px;margin-left:5.5px" width="11" height="11" viewBox="0 0 11 11"><circle cx="5.5" cy="5.5" r="4.9" fill="none" stroke="#4b4f58" stroke-width="1"/><path d="M5.5 4.9 V8.1" stroke="#4b4f58" stroke-width="1.1"/><circle cx="5.5" cy="3.2" r="0.6" fill="#4b4f58"/></svg></div>
<div class="a" style="left:220px;top:515px;width:1359px;height:1px;background:#e2e8f0;"></div>
<div class="a" style="left:228px;top:524px;width:16px;height:16px;background:#6b7280;border-radius:3.5px"></div>
<svg style="left:228px;top:524px;" width="16" height="16" viewBox="0 0 16 16"><path d="M3.4 9.2 L6.4 12 L12.8 5.3" fill="none" stroke="#fff" stroke-width="1.4" stroke-linecap="round" stroke-linejoin="round"/></svg>
<svg style="left:256.8px;top:524.4px;" width="15.9" height="15.9" viewBox="0 0 24 24"><path d="M11.525 2.295a.53.53 0 0 1 .95 0l2.31 4.679a2.123 2.123 0 0 0 1.595 1.16l5.166.756a.53.53 0 0 1 .294.904l-3.736 3.638a2.123 2.123 0 0 0-.611 1.878l.882 5.14a.53.53 0 0 1-.771.56l-4.618-2.428a2.122 2.122 0 0 0-1.973 0L6.396 21.01a.53.53 0 0 1-.77-.56l.881-5.139a2.122 2.122 0 0 0-.611-1.879L2.16 9.795a.53.53 0 0 1 .294-.906l5.165-.755a2.122 2.122 0 0 0 1.597-1.16z" fill="none" stroke="#1f2937" stroke-width="1.8" stroke-linejoin="round"/></svg>
<div class="a" style="left:284px;top:521px;width:82px;height:21px;background:#dad9fa;border-radius:5px"></div>
<div class="t" style="left:292.4px;top:526.63px;font-size:11.9px;color:#1e3fae;font-weight:700;">d3e9d1f2...</div>
<div class="t" style="left:374.6px;top:525.09px;font-size:12.3px;color:#2a2c33;font-weight:400;">2025-02-17 21:20:21</div>
<div class="t" style="left:524.6px;top:526.02px;font-size:11.2px;color:#2a2c33;font-weight:400;">qa</div>
<div class="t" style="left:674px;top:521px;height:21px;padding:0 8.6px 0 8.2px;background:#dad9fa;border-radius:5px;font-size:11.9px;font-weight:700;color:#1e3fae;line-height:20.6px">u-yzSBxcD</div>
<div class="a" style="left:824px;top:521px;width:142px;height:21px;background:#dad9fa;border-radius:5px"></div>
<div class="t" style="left:832.5px;top:525.08px;font-size:11.6px;color:#1e3fae;font-weight:700;">lf.docs.conversation...</div>
<div class="t" style="left:974.2px;top:525.81px;font-size:11.8px;color:#2a2c33;font-weight:400;">1.32s</div>
<div class="t" style="left:1044px;top:525.27px;font-size:11.85px;color:#2a2c33">109 <svg style="position:relative;display:inline-block;vertical-align:0.5px;margin:0 1.2px" width="8" height="6" viewBox="0 0 8 6"><path d="M0.3 3 H7.3 M4.5 0.5 L7.3 3 L4.5 5.5" fill="none" stroke="#2a2c33" stroke-width="1.0" stroke-linecap="round" stroke-linejoin="round"/></svg> 11 (<span style="font-size:10.5px">∑</span> 120)<svg style="position:relative;display:inline-block;vertical-align:-1.5px;margin-left:5.5px" width="11" height="11" viewBox="0 0 11 11"><circle cx="5.5" cy="5.5" r="4.9" fill="none" stroke="#4b4f58" stroke-width="1"/><path d="M5.5 4.9 V8.1" stroke="#4b4f58" stroke-width="1.1"/><circle cx="5.5" cy="3.2" r="0.6" fill="#4b4f58"/></svg></div>
<div class="a" style="left:220px;top:548px;width:1359px;height:1px;background:#e2e8f0;"></div>
<div class="a" style="left:228px;top:557px;width:16px;height:16px;background:#6b7280;border-radius:3.5px"></div>
<svg style="left:228px;top:557px;" width="16" height="16" viewBox="0 0 16 16"><path d="M3.4 9.2 L6.4 12 L12.8 5.3" fill="none" stroke="#fff" stroke-width="1.4" stroke-linecap="round" stroke-linejoin="round"/></svg>
<svg style="left:256.8px;top:557.4px;" width="15.9" height="15.9" viewBox="0 0 24 24"><path d="M11.525 2.295a.53.53 0 0 1 .95 0l2.31 4.679a2.123 2.123 0 0 0 1.595 1.16l5.166.756a.53.53 0 0 1 .294.904l-3.736 3.638a2.123 2.123 0 0 0-.611 1.878l.882 5.14a.53.53 0 0 1-.771.56l-4.618-2.428a2.122 2.122 0 0 0-1.973 0L6.396 21.01a.53.53 0 0 1-.77-.56l.881-5.139a2.122 2.122 0 0 0-.611-1.879L2.16 9.795a.53.53 0 0 1 .294-.906l5.165-.755a2.122 2.122 0 0 0 1.597-1.16z" fill="none" stroke="#1f2937" stroke-width="1.8" stroke-linejoin="round"/></svg>
<div class="a" style="left:284px;top:554px;width:82px;height:21px;background:#dad9fa;border-radius:5px"></div>
<div class="t" style="left:292.4px;top:559.63px;font-size:11.9px;color:#1e3fae;font-weight:700;">5cca9cf2...</div>
<div class="t" style="left:374.6px;top:558.09px;font-size:12.3px;color:#2a2c33;font-weight:400;">2025-02-17 21:20:19</div>
<div class="t" style="left:524.6px;top:559.02px;font-size:11.2px;color:#2a2c33;font-weight:400;">qa</div>
<div class="t" style="left:674px;top:554px;height:21px;padding:0 8.6px 0 8.2px;background:#dad9fa;border-radius:5px;font-size:11.9px;font-weight:700;color:#1e3fae;line-height:20.6px">u-yzSBxcD</div>
<div class="a" style="left:824px;top:554px;width:142px;height:21px;background:#dad9fa;border-radius:5px"></div>
<div class="t" style="left:832.5px;top:558.08px;font-size:11.6px;color:#1e3fae;font-weight:700;">lf.docs.conversation...</div>
<div class="t" style="left:974.2px;top:558.81px;font-size:11.8px;color:#2a2c33;font-weight:400;">6.96s</div>
<div class="t" style="left:1044px;top:558.27px;font-size:11.85px;color:#2a2c33">1,502 <svg style="position:relative;display:inline-block;vertical-align:0.5px;margin:0 1.2px" width="8" height="6" viewBox="0 0 8 6"><path d="M0.3 3 H7.3 M4.5 0.5 L7.3 3 L4.5 5.5" fill="none" stroke="#2a2c33" stroke-width="1.0" stroke-linecap="round" stroke-linejoin="round"/></svg> 251 (<span style="font-size:10.5px">∑</span> 1,753)<svg style="position:relative;display:inline-block;vertical-align:-1.5px;margin-left:5.5px" width="11" height="11" viewBox="0 0 11 11"><circle cx="5.5" cy="5.5" r="4.9" fill="none" stroke="#4b4f58" stroke-width="1"/><path d="M5.5 4.9 V8.1" stroke="#4b4f58" stroke-width="1.1"/><circle cx="5.5" cy="3.2" r="0.6" fill="#4b4f58"/></svg></div>
<div class="a" style="left:220px;top:581px;width:1359px;height:1px;background:#e2e8f0;"></div>
<div class="a" style="left:228px;top:590px;width:16px;height:16px;background:#6b7280;border-radius:3.5px"></div>
<svg style="left:228px;top:590px;" width="16" height="16" viewBox="0 0 16 16"><path d="M3.4 9.2 L6.4 12 L12.8 5.3" fill="none" stroke="#fff" stroke-width="1.4" stroke-linecap="round" stroke-linejoin="round"/></svg>
<svg style="left:256.8px;top:590.4px;" width="15.9" height="15.9" viewBox="0 0 24 24"><path d="M11.525 2.295a.53.53 0 0 1 .95 0l2.31 4.679a2.123 2.123 0 0 0 1.595 1.16l5.166.756a.53.53 0 0 1 .294.904l-3.736 3.638a2.123 2.123 0 0 0-.611 1.878l.882 5.14a.53.53 0 0 1-.771.56l-4.618-2.428a2.122 2.122 0 0 0-1.973 0L6.396 21.01a.53.53 0 0 1-.77-.56l.881-5.139a2.122 2.122 0 0 0-.611-1.879L2.16 9.795a.53.53 0 0 1 .294-.906l5.165-.755a2.122 2.122 0 0 0 1.597-1.16z" fill="none" stroke="#1f2937" stroke-width="1.8" stroke-linejoin="round"/></svg>
<div class="a" style="left:284px;top:587px;width:82px;height:21px;background:#dad9fa;border-radius:5px"></div>
<div class="t" style="left:292.4px;top:592.63px;font-size:11.9px;color:#1e3fae;font-weight:700;">88f2a7b0...</div>
<div class="t" style="left:374.6px;top:591.09px;font-size:12.3px;color:#2a2c33;font-weight:400;">2025-02-17 18:25:26</div>
<div class="t" style="left:524.6px;top:592.02px;font-size:11.2px;color:#2a2c33;font-weight:400;">qa</div>
<div class="t" style="left:674px;top:587px;height:21px;padding:0 8.6px 0 8.2px;background:#dad9fa;border-radius:5px;font-size:11.9px;font-weight:700;color:#1e3fae;line-height:20.6px">u-f0YfBSL</div>
<div class="a" style="left:824px;top:587px;width:142px;height:21px;background:#dad9fa;border-radius:5px"></div>
<div class="t" style="left:832.5px;top:591.08px;font-size:11.6px;color:#1e3fae;font-weight:700;">lf.docs.conversation...</div>
<div class="t" style="left:974.2px;top:591.81px;font-size:11.8px;color:#2a2c33;font-weight:400;">2.81s</div>
<div class="t" style="left:1044px;top:591.27px;font-size:11.85px;color:#2a2c33">614 <svg style="position:relative;display:inline-block;vertical-align:0.5px;margin:0 1.2px" width="8" height="6" viewBox="0 0 8 6"><path d="M0.3 3 H7.3 M4.5 0.5 L7.3 3 L4.5 5.5" fill="none" stroke="#2a2c33" stroke-width="1.0" stroke-linecap="round" stroke-linejoin="round"/></svg> 33 (<span style="font-size:10.5px">∑</span> 647)<svg style="position:relative;display:inline-block;vertical-align:-1.5px;margin-left:5.5px" width="11" height="11" viewBox="0 0 11 11"><circle cx="5.5" cy="5.5" r="4.9" fill="none" stroke="#4b4f58" stroke-width="1"/><path d="M5.5 4.9 V8.1" stroke="#4b4f58" stroke-width="1.1"/><circle cx="5.5" cy="3.2" r="0.6" fill="#4b4f58"/></svg></div>
<div class="a" style="left:220px;top:614px;width:1359px;height:1px;background:#e2e8f0;"></div>
<div class="a" style="left:228px;top:623px;width:16px;height:16px;background:#6b7280;border-radius:3.5px"></div>
<svg style="left:228px;top:623px;" width="16" height="16" viewBox="0 0 16 16"><path d="M3.4 9.2 L6.4 12 L12.8 5.3" fill="none" stroke="#fff" stroke-width="1.4" stroke-linecap="round" stroke-linejoin="round"/></svg>
<svg style="left:256.8px;top:623.4px;" width="15.9" height="15.9" viewBox="0 0 24 24"><path d="M11.525 2.295a.53.53 0 0 1 .95 0l2.31 4.679a2.123 2.123 0 0 0 1.595 1.16l5.166.756a.53.53 0 0 1 .294.904l-3.736 3.638a2.123 2.123 0 0 0-.611 1.878l.882 5.14a.53.53 0 0 1-.771.56l-4.618-2.428a2.122 2.122 0 0 0-1.973 0L6.396 21.01a.53.53 0 0 1-.77-.56l.881-5.139a2.122 2.122 0 0 0-.611-1.879L2.16 9.795a.53.53 0 0 1 .294-.906l5.165-.755a2.122 2.122 0 0 0 1.597-1.16z" fill="none" stroke="#1f2937" stroke-width="1.8" stroke-linejoin="round"/></svg>
<div class="a" style="left:284px;top:620px;width:82px;height:21px;background:#dad9fa;border-radius:5px"></div>
<div class="t" style="left:292.4px;top:625.63px;font-size:11.9px;color:#1e3fae;font-weight:700;">b669529...</div>
<div class="t" style="left:374.6px;top:624.09px;font-size:12.3px;color:#2a2c33;font-weight:400;">2025-02-17 16:58:45</div>
<div class="t" style="left:524.6px;top:625.02px;font-size:11.2px;color:#2a2c33;font-weight:400;">qa</div>
<div class="t" style="left:674px;top:620px;height:21px;padding:0 8.6px 0 8.2px;background:#dad9fa;border-radius:5px;font-size:11.9px;font-weight:700;color:#1e3fae;line-height:20.6px">u-VlZzvwo</div>
<div class="a" style="left:824px;top:620px;width:142px;height:21px;background:#dad9fa;border-radius:5px"></div>
<div class="t" style="left:832.5px;top:624.08px;font-size:11.6px;color:#1e3fae;font-weight:700;">lf.docs.conversation...</div>
<div class="t" style="left:974.2px;top:624.81px;font-size:11.8px;color:#2a2c33;font-weight:400;">5.07s</div>
<div class="t" style="left:1044px;top:624.27px;font-size:11.85px;color:#2a2c33">393 <svg style="position:relative;display:inline-block;vertical-align:0.5px;margin:0 1.2px" width="8" height="6" viewBox="0 0 8 6"><path d="M0.3 3 H7.3 M4.5 0.5 L7.3 3 L4.5 5.5" fill="none" stroke="#2a2c33" stroke-width="1.0" stroke-linecap="round" stroke-linejoin="round"/></svg> 136 (<span style="font-size:10.5px">∑</span> 529)<svg style="position:relative;display:inline-block;vertical-align:-1.5px;margin-left:5.5px" width="11" height="11" viewBox="0 0 11 11"><circle cx="5.5" cy="5.5" r="4.9" fill="none" stroke="#4b4f58" stroke-width="1"/><path d="M5.5 4.9 V8.1" stroke="#4b4f58" stroke-width="1.1"/><circle cx="5.5" cy="3.2" r="0.6" fill="#4b4f58"/></svg></div>
<div class="a" style="left:220px;top:647px;width:1359px;height:1px;background:#e2e8f0;"></div>
<div class="a" style="left:228px;top:656px;width:16px;height:16px;background:#6b7280;border-radius:3.5px"></div>
<svg style="left:228px;top:656px;" width="16" height="16" viewBox="0 0 16 16"><path d="M3.4 9.2 L6.4 12 L12.8 5.3" fill="none" stroke="#fff" stroke-width="1.4" stroke-linecap="round" stroke-linejoin="round"/></svg>
<svg style="left:256.8px;top:656.4px;" width="15.9" height="15.9" viewBox="0 0 24 24"><path d="M11.525 2.295a.53.53 0 0 1 .95 0l2.31 4.679a2.123 2.123 0 0 0 1.595 1.16l5.166.756a.53.53 0 0 1 .294.904l-3.736 3.638a2.123 2.123 0 0 0-.611 1.878l.882 5.14a.53.53 0 0 1-.771.56l-4.618-2.428a2.122 2.122 0 0 0-1.973 0L6.396 21.01a.53.53 0 0 1-.77-.56l.881-5.139a2.122 2.122 0 0 0-.611-1.879L2.16 9.795a.53.53 0 0 1 .294-.906l5.165-.755a2.122 2.122 0 0 0 1.597-1.16z" fill="none" stroke="#1f2937" stroke-width="1.8" stroke-linejoin="round"/></svg>
<div class="a" style="left:284px;top:653px;width:82px;height:21px;background:#dad9fa;border-radius:5px"></div>
<div class="t" style="left:292.4px;top:658.63px;font-size:11.9px;color:#1e3fae;font-weight:700;">907cbf6e...</div>
<div class="t" style="left:374.6px;top:657.09px;font-size:12.3px;color:#2a2c33;font-weight:400;">2025-02-17 16:37:01</div>
<div class="t" style="left:524.6px;top:658.02px;font-size:11.2px;color:#2a2c33;font-weight:400;">qa</div>
<div class="t" style="left:674px;top:653px;height:21px;padding:0 8.6px 0 8.2px;background:#dad9fa;border-radius:5px;font-size:11.9px;font-weight:700;color:#1e3fae;line-height:20.6px">u-rTrjI4M</div>
<div class="a" style="left:824px;top:653px;width:142px;height:21px;background:#dad9fa;border-radius:5px"></div>
<div class="t" style="left:832.5px;top:657.08px;font-size:11.6px;color:#1e3fae;font-weight:700;">lf.docs.conversation....</div>
<div class="t" style="left:974.2px;top:657.81px;font-size:11.8px;color:#2a2c33;font-weight:400;">3.11s</div>
<div class="t" style="left:1044px;top:657.27px;font-size:11.85px;color:#2a2c33">426 <svg style="position:relative;display:inline-block;vertical-align:0.5px;margin:0 1.2px" width="8" height="6" viewBox="0 0 8 6"><path d="M0.3 3 H7.3 M4.5 0.5 L7.3 3 L4.5 5.5" fill="none" stroke="#2a2c33" stroke-width="1.0" stroke-linecap="round" stroke-linejoin="round"/></svg> 64 (<span style="font-size:10.5px">∑</span> 490)<svg style="position:relative;display:inline-block;vertical-align:-1.5px;margin-left:5.5px" width="11" height="11" viewBox="0 0 11 11"><circle cx="5.5" cy="5.5" r="4.9" fill="none" stroke="#4b4f58" stroke-width="1"/><path d="M5.5 4.9 V8.1" stroke="#4b4f58" stroke-width="1.1"/><circle cx="5.5" cy="3.2" r="0.6" fill="#4b4f58"/></svg></div>
<div class="a" style="left:220px;top:680px;width:1359px;height:1px;background:#e2e8f0;"></div>
<div class="a" style="left:228px;top:689px;width:16px;height:16px;background:#6b7280;border-radius:3.5px"></div>
<svg style="left:228px;top:689px;" width="16" height="16" viewBox="0 0 16 16"><path d="M3.4 9.2 L6.4 12 L12.8 5.3" fill="none" stroke="#fff" stroke-width="1.4" stroke-linecap="round" stroke-linejoin="round"/></svg>
<svg style="left:256.8px;top:689.4px;" width="15.9" height="15.9" viewBox="0 0 24 24"><path d="M11.525 2.295a.53.53 0 0 1 .95 0l2.31 4.679a2.123 2.123 0 0 0 1.595 1.16l5.166.756a.53.53 0 0 1 .294.904l-3.736 3.638a2.123 2.123 0 0 0-.611 1.878l.882 5.14a.53.53 0 0 1-.771.56l-4.618-2.428a2.122 2.122 0 0 0-1.973 0L6.396 21.01a.53.53 0 0 1-.77-.56l.881-5.139a2.122 2.122 0 0 0-.611-1.879L2.16 9.795a.53.53 0 0 1 .294-.906l5.165-.755a2.122 2.122 0 0 0 1.597-1.16z" fill="none" stroke="#1f2937" stroke-width="1.8" stroke-linejoin="round"/></svg>
<div class="a" style="left:284px;top:686px;width:82px;height:21px;background:#dad9fa;border-radius:5px"></div>
<div class="t" style="left:292.4px;top:691.63px;font-size:11.9px;color:#1e3fae;font-weight:700;">7195d78e...</div>
<div class="t" style="left:374.6px;top:690.09px;font-size:12.3px;color:#2a2c33;font-weight:400;">2025-02-17 16:36:43</div>
<div class="t" style="left:524.6px;top:691.02px;font-size:11.2px;color:#2a2c33;font-weight:400;">qa</div>
<div class="t" style="left:674px;top:686px;height:21px;padding:0 8.6px 0 8.2px;background:#dad9fa;border-radius:5px;font-size:11.9px;font-weight:700;color:#1e3fae;line-height:20.6px">u-rTrjI4M</div>
<div class="a" style="left:824px;top:686px;width:142px;height:21px;background:#dad9fa;border-radius:5px"></div>
<div class="t" style="left:832.5px;top:690.08px;font-size:11.6px;color:#1e3fae;font-weight:700;">lf.docs.conversation....</div>
<div class="t" style="left:974.2px;top:690.81px;font-size:11.8px;color:#2a2c33;font-weight:400;">2.55s</div>
<div class="t" style="left:1044px;top:690.27px;font-size:11.85px;color:#2a2c33">859 <svg style="position:relative;display:inline-block;vertical-align:0.5px;margin:0 1.2px" width="8" height="6" viewBox="0 0 8 6"><path d="M0.3 3 H7.3 M4.5 0.5 L7.3 3 L4.5 5.5" fill="none" stroke="#2a2c33" stroke-width="1.0" stroke-linecap="round" stroke-linejoin="round"/></svg> 23 (<span style="font-size:10.5px">∑</span> 882)<svg style="position:relative;display:inline-block;vertical-align:-1.5px;margin-left:5.5px" width="11" height="11" viewBox="0 0 11 11"><circle cx="5.5" cy="5.5" r="4.9" fill="none" stroke="#4b4f58" stroke-width="1"/><path d="M5.5 4.9 V8.1" stroke="#4b4f58" stroke-width="1.1"/><circle cx="5.5" cy="3.2" r="0.6" fill="#4b4f58"/></svg></div>
<div class="a" style="left:1270px;top:156px;width:205px;height:73px;background:#fff;border:1px solid #e2e8f0;border-radius:6px;box-shadow:0 5px 9px rgba(15,23,42,0.14),0 1px 3px rgba(15,23,42,0.08)"></div>
<div class="a" style="left:1275px;top:160px;width:195px;height:31.5px;background:#f1f4f9;border-radius:4px"></div>
<svg style="left:1284.5px;top:169px;" width="13" height="14" viewBox="0 0 13 14"><path d="M1 3 H12 M4.5 3 V1.5 A0.8 0.8 0 0 1 5.3 0.7 H7.7 A0.8 0.8 0 0 1 8.5 1.5 V3 M2.2 3 L2.7 12.3 A1 1 0 0 0 3.7 13.3 H9.3 A1 1 0 0 0 10.3 12.3 L10.8 3" fill="none" stroke="#6b7280" stroke-width="1.3" stroke-linecap="round" stroke-linejoin="round"/></svg>
<div class="t" style="left:1307.4px;top:169.49px;font-size:13.6px;color:#6b7280;font-weight:400;">Delete Traces</div>
<svg style="left:1285.5px;top:202.5px;" width="11" height="11" viewBox="0 0 11 11"><path d="M5.5 0.5 V10.5 M0.5 5.5 H10.5" stroke="#0f172a" stroke-width="1.4" stroke-linecap="round"/></svg>
<div class="t" style="left:1307.4px;top:201.22px;font-size:13.8px;color:#0f172a;font-weight:400;">Add to Annotation Queue</div>
<div class="a" style="left:1261px;top:107px;width:226px;height:134px;border:5px solid #ff2600"></div>
</body></html>
